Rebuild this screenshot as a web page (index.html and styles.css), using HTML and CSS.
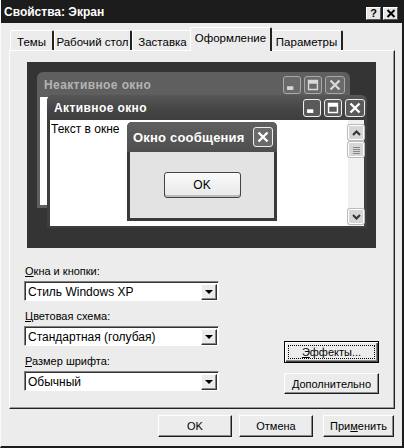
FILE: index.html
```html
<!DOCTYPE html>
<html lang="ru">
<head>
    <meta charset="UTF-8">
    <meta name="viewport" content="width=device-width, initial-scale=1.0">
    <title>Свойства: Экран</title>
    <link rel="stylesheet" href="styles.css">
</head>
<body>

<svg class="defs" width="0" height="0">
    <symbol id="i-min" viewBox="0 0 18 18"><rect x="4" y="11" width="6" height="3"/></symbol>
    <symbol id="i-max" viewBox="0 0 18 18"><path d="M4 4h10v10H4z" fill="none" stroke-width="1.6"/><rect x="4" y="4" width="10" height="3"/></symbol>
    <symbol id="i-close" viewBox="0 0 18 18"><path d="M4.5 4.5l9 9M13.5 4.5l-9 9" stroke-width="2.4" fill="none"/></symbol>
</svg>

<div class="dialog">
    <div class="titlebar">
        <span class="title">Свойства: Экран</span>
        <span class="tbtn">?</span>
        <span class="tbtn">
            <svg width="10" height="9" viewBox="0 0 10 9"><path d="M1.5 1l7 7M8.5 1l-7 7" stroke="#000" stroke-width="2"/></svg>
        </span>
    </div>

    <div class="tabs">
        <span class="tab t-themes">Темы</span>
        <span class="tab t-desktop">Рабочий стол</span>
        <span class="tab t-saver">Заставка</span>
        <span class="tab t-look active">Оформление</span>
        <span class="tab t-params">Параметры</span>
    </div>

    <div class="panel">
        <div class="preview">
            <div class="win inactive">
                <div class="win-bar">
                    <span class="win-title">Неактивное окно</span>
                    <span class="wbtn"><svg><use href="#i-min"/></svg></span>
                    <span class="wbtn"><svg><use href="#i-max"/></svg></span>
                    <span class="wbtn wide"><svg><use href="#i-close"/></svg></span>
                </div>
                <div class="win-body"></div>
            </div>

            <div class="win active">
                <div class="win-bar">
                    <span class="win-title">Активное окно</span>
                    <span class="wbtn"><svg><use href="#i-min"/></svg></span>
                    <span class="wbtn"><svg><use href="#i-max"/></svg></span>
                    <span class="wbtn wide"><svg><use href="#i-close"/></svg></span>
                </div>
                <div class="win-body">
                    <span class="win-text">Текст в окне</span>
                    <div class="scrollbar">
                        <span class="sb-btn">
                            <svg width="9" height="6" viewBox="0 0 9 6"><path d="M1 5l3.5-3.5L8 5" fill="none" stroke="#333" stroke-width="2"/></svg>
                        </span>
                        <span class="sb-thumb">
                            <svg width="7" height="8" viewBox="0 0 7 8"><path d="M0 1.5h7M0 3.5h7M0 5.5h7M0 7.5h7" stroke="#888"/></svg>
                        </span>
                        <span class="sb-track"></span>
                        <span class="sb-btn">
                            <svg width="9" height="6" viewBox="0 0 9 6"><path d="M1 1l3.5 3.5L8 1" fill="none" stroke="#333" stroke-width="2"/></svg>
                        </span>
                    </div>
                </div>
            </div>

            <div class="msgbox">
                <div class="msg-bar">
                    <span class="win-title">Окно сообщения</span>
                    <span class="wbtn wide"><svg><use href="#i-close"/></svg></span>
                </div>
                <div class="msg-body">
                    <span class="msg-ok">OK</span>
                </div>
            </div>
        </div>

        <div class="settings">
            <div class="fields">
                <div class="field">
                    <span class="label"><u>О</u>кна и кнопки:</span>
                    <div class="select">
                        <span class="select-text">Стиль Windows XP</span>
                        <span class="select-arrow"></span>
                    </div>
                </div>
                <div class="field">
                    <span class="label"><u>Ц</u>ветовая схема:</span>
                    <div class="select">
                        <span class="select-text">Стандартная (голубая)</span>
                        <span class="select-arrow"></span>
                    </div>
                </div>
                <div class="field">
                    <span class="label"><u>Р</u>азмер шрифта:</span>
                    <div class="select">
                        <span class="select-text">Обычный</span>
                        <span class="select-arrow"></span>
                    </div>
                </div>
            </div>

            <div class="side-buttons">
                <span class="btn default"><span class="focus"><u>Э</u>ффекты...</span></span>
                <span class="btn"><u>Д</u>ополнительно</span>
            </div>
        </div>
    </div>

    <div class="footer">
        <span class="btn">OK</span>
        <span class="btn">Отмена</span>
        <span class="btn apply">При<u>м</u>енить</span>
    </div>
</div>

</body>
</html>
```

FILE: styles.css
```css
* {
    box-sizing: border-box;
}

body {
    margin: 0;
    font-family: "Liberation Sans", Arial, sans-serif;
    font-size: 11px;
    color: #000;
    background: #ececec;
}

.defs {
    position: absolute;
}

.dialog {
    width: 404px;
    height: 448px;
    background: #ececec;
    border-left: 1px solid #fafafa;
    border-right: 2px solid #1c1c1c;
    border-bottom: 2px solid #1c1c1c;
    display: flex;
    flex-direction: column;
    overflow: hidden;
}

/* title bar */

.titlebar {
    flex: none;
    height: 23px;
    background: #1c1c1c;
    color: white;
    display: flex;
    align-items: flex-end;
    padding: 0 4px 3px 3px;
}

.title {
    flex: 1;
    font-weight: bold;
    font-size: 12px;
    line-height: 15px;
}

.tbtn {
    width: 15px;
    height: 13px;
    margin-left: 2px;
    background: #e6e6e6;
    border: 1px solid;
    border-color: #fff #555 #555 #fff;
    color: #000;
    font-weight: bold;
    font-size: 11px;
    line-height: 11px;
    display: flex;
    align-items: center;
    justify-content: center;
}

/* tabs */

.tabs {
    flex: none;
    height: 27px;
    padding-left: 9px;
    display: flex;
    align-items: flex-end;
}

.tab {
    height: 20px;
    padding-top: 4px;
    line-height: 14px;
    text-align: center;
    border-left: 1px solid #fff;
    border-top: 1px solid #fff;
    border-right: 2px solid #222;
    border-radius: 2px 2px 0 0;
    white-space: nowrap;
    font-size: 11.5px;
}

.t-themes { width: 44px; }
.t-desktop { width: 78px; }
.t-saver { width: 60px; border-right: none; }
.t-params { width: 72px; }

.tab.active {
    width: 82px;
    height: 24px;
    padding-top: 3px;
    margin: 0 -1px -1px -2px;
    background: #ececec;
    position: relative;
    z-index: 1;
}

/* panel */

.panel {
    flex: none;
    height: 359px;
    margin: 0 7px 0 8px;
    border: 1px solid;
    border-color: #fff #222 #222 #fff;
    box-shadow: inset -1px -1px #9a9a9a;
}

.preview {
    position: relative;
    width: 349px;
    height: 186px;
    margin: 11px 0 0 17px;
    background: #343434;
}

.win {
    position: absolute;
    display: flex;
    flex-direction: column;
    border-radius: 6px 6px 0 0;
}

.win.inactive {
    left: 10px;
    top: 10px;
    width: 313px;
    height: 136px;
    background: #5f5f5f;
    padding: 0 3px 3px;
}

.win.active {
    left: 20px;
    top: 33px;
    width: 320px;
    height: 133px;
    background: #3e3e3e;
    padding: 0 3px 2px;
}

.win-bar {
    flex: none;
    height: 25px;
    display: flex;
    align-items: center;
    padding: 0 2px 0 4px;
    gap: 3px;
}

.win-title {
    flex: 1;
    font-weight: bold;
    font-size: 12px;
    letter-spacing: 0.4px;
    white-space: nowrap;
}

.inactive .win-title {
    color: #b4b4b4;
}

.active .win-bar {
    height: 25px;
    background: linear-gradient(#575757, #444 60%, #3e3e3e);
    border-radius: 6px 6px 0 0;
    margin: 0 -3px;
    padding: 0 2px 0 7px;
}

.active .win-title {
    color: #fff;
}

.wbtn {
    flex: none;
    width: 18px;
    height: 18px;
    border: 1px solid #eee;
    border-radius: 3px;
    background: #5a5a5a;
    display: flex;
    align-items: center;
    justify-content: center;
}

.wbtn.wide {
    width: 20px;
}

.wbtn svg {
    width: 18px;
    height: 18px;
    fill: #fff;
    stroke: #fff;
}

.inactive .wbtn {
    border-color: #a8a8a8;
    background: #6a6a6a;
}

.inactive .wbtn svg {
    fill: #d8d8d8;
    stroke: #d8d8d8;
}

.win-body {
    flex: 1;
    background: #fff;
    display: flex;
    justify-content: space-between;
}

.win-text {
    padding: 2px 0 0 1px;
    line-height: 14px;
    font-size: 12px;
}

.scrollbar {
    width: 16px;
    background: #f0f0f0;
    display: flex;
    flex-direction: column;
    padding: 5px 0 2px;
    gap: 2px;
}

.sb-btn,
.sb-thumb {
    height: 15px;
    background: #d6d6d6;
    border: 1px solid #fff;
    border-radius: 2px;
    box-shadow: 0 0 0 1px #bbb;
    display: flex;
    align-items: center;
    justify-content: center;
}

.sb-track {
    flex: 1;
}

.msgbox {
    position: absolute;
    left: 100px;
    top: 60px;
    width: 150px;
    height: 99px;
    background: #3a3a3a;
    border-radius: 5px 5px 0 0;
    padding: 0 3px 3px;
    display: flex;
    flex-direction: column;
}

.msg-bar {
    flex: none;
    height: 30px;
    margin: 0 -3px;
    padding: 0 4px 0 6px;
    border-radius: 5px 5px 0 0;
    background: linear-gradient(#606060, #4e4e4e);
    display: flex;
    align-items: center;
}

.msg-bar .win-title {
    color: #fff;
    font-size: 13px;
    letter-spacing: 0.2px;
}

.msg-bar .wbtn {
    height: 20px;
    background: #6a6a6a;
}

.msg-body {
    flex: 1;
    background: #e3e3e3;
    display: flex;
    justify-content: center;
    padding-top: 20px;
}

.msg-ok {
    width: 77px;
    height: 26px;
    border: 1px solid #444;
    border-radius: 3px;
    background: linear-gradient(#fafafa, #e8e8e8);
    box-shadow: inset 0 -2px #bbb;
    text-align: center;
    line-height: 24px;
    font-size: 12px;
}

/* settings */

.settings {
    display: flex;
    justify-content: space-between;
    align-items: flex-end;
    margin-top: 16px;
    padding: 0 15px 0 14px;
}

.fields {
    display: flex;
    flex-direction: column;
    gap: 8px;
    padding-bottom: 3px;
}

.field {
    display: flex;
    flex-direction: column;
    gap: 3px;
}

.label {
    line-height: 14px;
    padding-left: 1px;
}

.select {
    width: 195px;
    height: 20px;
    background: #fff;
    border: 1px solid;
    border-color: #808080 #fff #fff #808080;
    box-shadow: inset 1px 1px #333;
    display: flex;
    align-items: center;
    justify-content: space-between;
    padding: 2px 1px 1px 3px;
    font-size: 12px;
}

.select-arrow {
    width: 16px;
    height: 16px;
    background: #ececec;
    border: 1px solid;
    border-color: #fff #333 #333 #fff;
    box-shadow: inset -1px -1px #888;
    position: relative;
}

.select-arrow::after {
    content: "";
    position: absolute;
    left: 3px;
    top: 5px;
    border-left: 4px solid transparent;
    border-right: 4px solid transparent;
    border-top: 4px solid #000;
}

.side-buttons {
    display: flex;
    flex-direction: column;
    gap: 10px;
}

.btn {
    width: 95px;
    height: 21px;
    background: #ececec;
    border: 1px solid;
    border-color: #fff #1c1c1c #1c1c1c #fff;
    box-shadow: inset -1px -1px #8a8a8a;
    display: flex;
    align-items: center;
    justify-content: center;
    line-height: 14px;
}

.btn.default {
    height: 22px;
    border: 1px solid #000;
    box-shadow: inset 1px 1px #fff, inset -1px -1px #444, inset -2px -2px #8a8a8a;
    padding: 3px;
}

.focus {
    flex: 1;
    align-self: stretch;
    border: 1px dotted #000;
    text-align: center;
    line-height: 13px;
}

/* footer */

.footer {
    flex: 1;
    display: flex;
    justify-content: flex-end;
    padding: 6px 8px 0 0;
    gap: 7px;
}

.footer .btn {
    width: 74px;
    height: 22px;
}

.footer .apply {
    width: 71px;
    margin-left: 3px;
}
```
